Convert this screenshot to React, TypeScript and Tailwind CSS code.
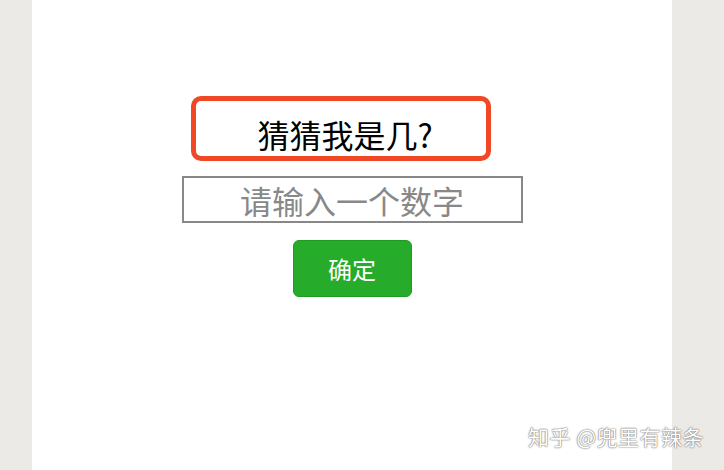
export default function App() {
  return (
    <div className="relative flex h-[470px] w-[724px] overflow-hidden bg-[#ebeae6] font-['Noto_Sans_CJK_SC','Noto_Sans',sans-serif]">
      <div className="ml-[32px] flex h-full w-[640px] flex-col items-center bg-white pt-[96px]">
        <div className="mr-[22px] flex h-[65px] w-[300px] items-end justify-center rounded-[10px] border-[5px] border-[#f04824] pb-[2px] pl-[8px]">
          <span className="text-[32px] leading-[40px] text-black">猜猜我是几?</span>
        </div>
        <input
          className="mt-[15px] h-[47px] w-[341px] border-2 border-[#888888] text-center text-[32px] leading-[43px] text-black placeholder:text-[#888888] outline-none"
          placeholder="请输入一个数字"
        />
        <button className="mt-[17px] flex h-[57px] w-[119px] items-center justify-center rounded-[6px] border border-[#1f9a23] bg-[#26ab2a] text-[24px] text-white">
          确定
        </button>
      </div>
      <div className="absolute left-[528px] top-[421px] text-[21px] tracking-[0.5px] text-white [text-shadow:0_0_1px_#555,0_0_2px_#888]">
        知乎 @兜里有辣条
      </div>
    </div>
  )
}
